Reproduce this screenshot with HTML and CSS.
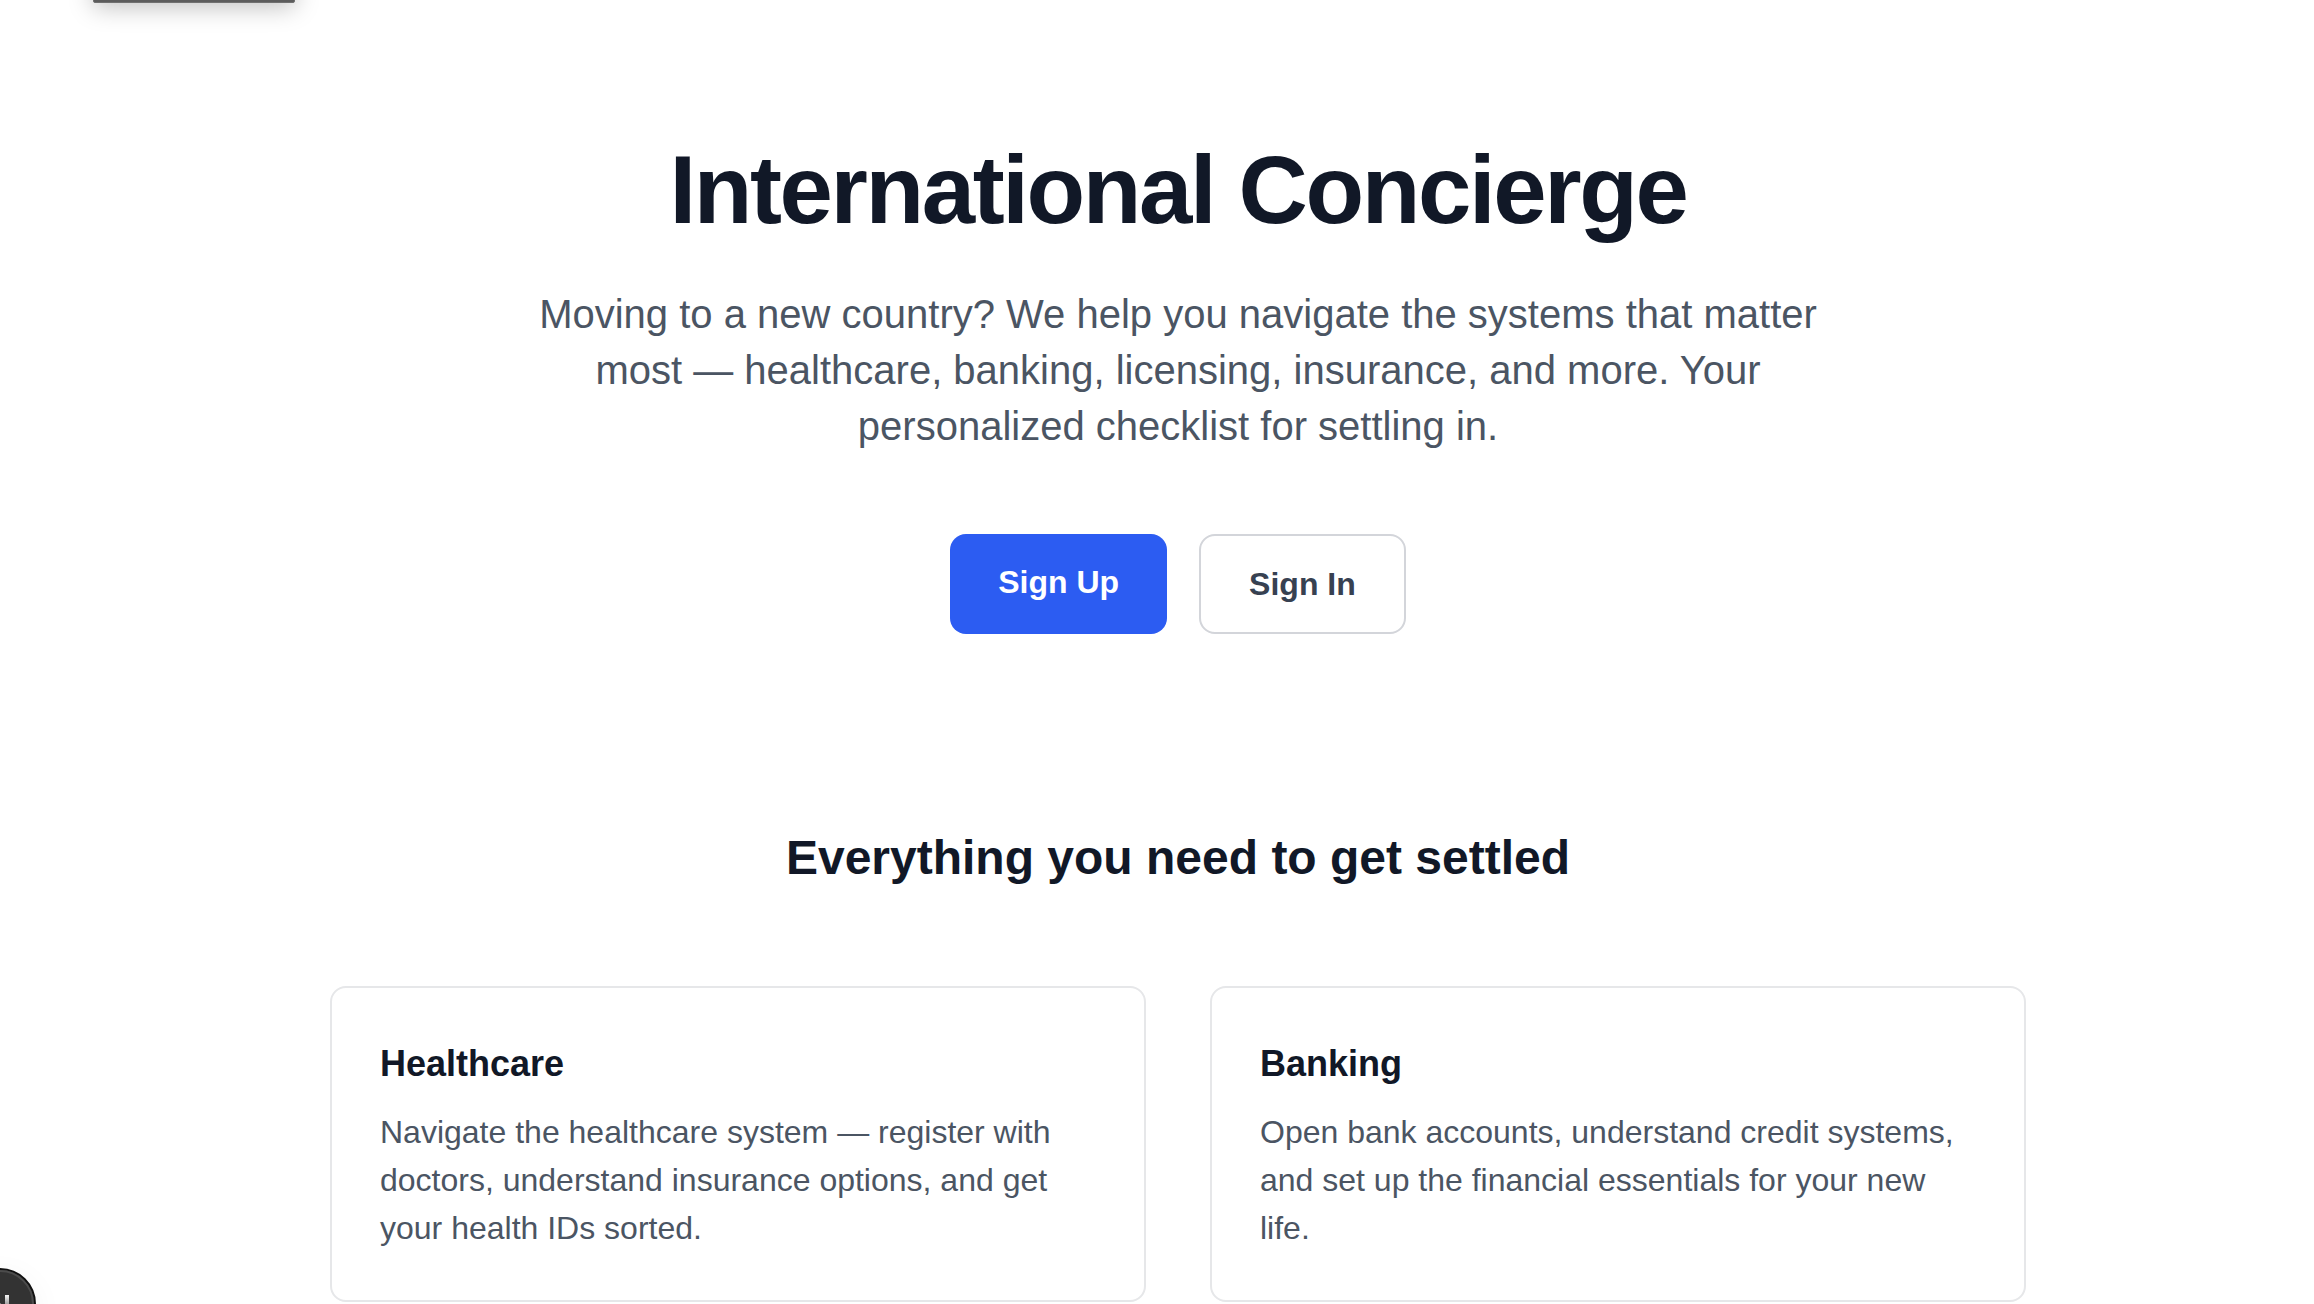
FILE: index.html
```html
<!DOCTYPE html>
<html lang="en">
<head>
    <meta charset="UTF-8">
    <meta name="viewport" content="width=device-width, initial-scale=1.0">
    <title>International Concierge</title>
    <link rel="stylesheet" href="styles.css">
</head>
<body>
    <div class="toolbar"></div>
    <main class="page">
        <section class="hero">
            <h1>International Concierge</h1>
            <p class="intro">Moving to a new country? We help you navigate the systems that matter most — healthcare, banking, licensing, insurance, and more. Your personalized checklist for settling in.</p>
            <div class="actions">
                <a class="btn btn-primary" href="#signup">Sign Up</a>
                <a class="btn btn-outline" href="#signin">Sign In</a>
            </div>
        </section>
        <section class="features">
            <h2>Everything you need to get settled</h2>
            <div class="cards">
                <article class="card">
                    <h3>Healthcare</h3>
                    <p>Navigate the healthcare system — register with doctors, understand insurance options, and get your health IDs sorted.</p>
                </article>
                <article class="card">
                    <h3>Banking</h3>
                    <p>Open bank accounts, understand credit systems, and set up the financial essentials for your new life.</p>
                </article>
            </div>
        </section>
    </main>
    <button class="badge" type="button" aria-label="Open tools">
        <svg width="72" height="72" viewBox="0 0 72 72" fill="none" aria-hidden="true">
            <defs>
                <linearGradient id="stem" x1="0" y1="26" x2="0" y2="48" gradientUnits="userSpaceOnUse">
                    <stop stop-color="#fff"/>
                    <stop offset="1" stop-color="#fff" stop-opacity="0"/>
                </linearGradient>
            </defs>
            <circle cx="36" cy="36" r="35" fill="#333" stroke="#111" stroke-width="2"/>
            <circle cx="36" cy="36" r="33" stroke="#4c4c4c" stroke-width="2"/>
            <path d="M28 48V28l20 26" stroke="#fff" stroke-width="4"/>
            <rect x="41" y="27" width="4" height="20" fill="url(#stem)"/>
        </svg>
    </button>
</body>
</html>
```
FILE: styles.css
```css
*{
    box-sizing: border-box;
    margin: 0;
    padding: 0;
}
body{
    background-color: #fff;
    color: #111827;
    font-family: "Liberation Sans", Arial, Helvetica, sans-serif;
    font-size: 32px;
    line-height: 48px;
    min-height: 100vh;
    overflow-x: hidden;
}
.page{
    margin-left: 42px;
}
.hero{
    max-width: 1792px;
    margin: 0 auto;
    padding: 142px 48px 96px;
    text-align: center;
}
h1{
    font-size: 96px;
    line-height: 96px;
    letter-spacing: -0.025em;
}
.intro{
    max-width: 1344px;
    margin: 48px auto 0;
    color: #4b5563;
    font-size: 40px;
    line-height: 56px;
}
.actions{
    display: flex;
    justify-content: center;
    gap: 32px;
    margin-top: 80px;
}
.btn{
    padding: 24px 48px;
    border-radius: 16px;
    font-weight: bold;
    text-decoration: none;
}
.btn-primary{
    background-color: #2c5cf2;
    color: #fff;
}
.btn-outline{
    border: 2px solid #d3d5da;
    color: #374151;
}
.features{
    max-width: 1792px;
    margin: 0 auto;
    padding: 96px 48px 0;
}
h2{
    font-size: 48px;
    line-height: 64px;
    text-align: center;
}
.cards{
    display: grid;
    grid-template-columns: 1fr 1fr;
    gap: 64px;
    margin-top: 96px;
}
.card{
    padding: 48px;
    border: 2px solid #e6e7e9;
    border-radius: 16px;
}
h3{
    font-size: 36px;
    line-height: 56px;
}
.card p{
    margin-top: 16px;
    color: #4b5563;
}
/* floating bits over the page edges */
.toolbar{
    position: fixed;
    top: -61px;
    left: 93px;
    width: 202px;
    height: 64px;
    background-color: #5c5c5c;
    border: 1px solid #707070;
    border-radius: 2px;
    box-shadow: 0 4px 24px rgba(0, 0, 0, 0.25);
}
.badge{
    position: fixed;
    left: -36px;
    bottom: -36px;
    width: 72px;
    height: 72px;
    border: none;
    border-radius: 50%;
    background: none;
    box-shadow: 0 8px 32px rgba(0, 0, 0, 0.05);
    cursor: pointer;
}
.badge svg{
    display: block;
}
@media (max-width: 900px){
    .page{
        margin-left: 0;
    }
    .cards{
        grid-template-columns: 1fr;
    }
}
```
